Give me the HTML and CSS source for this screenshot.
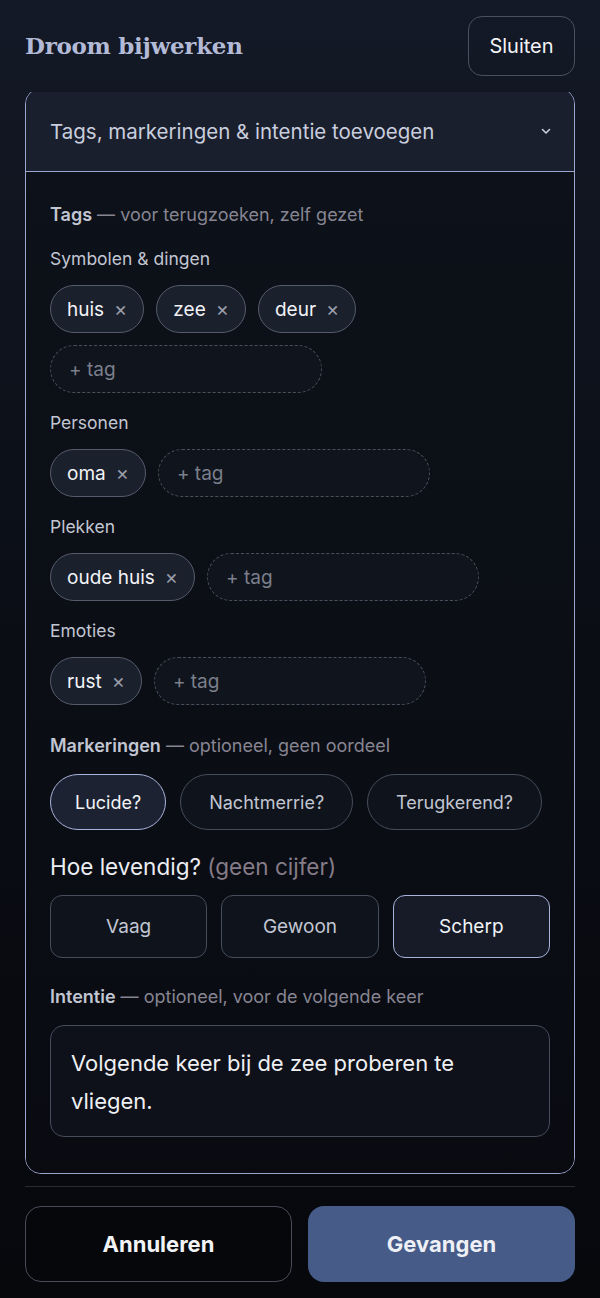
FILE: index.html
```html
<!DOCTYPE html>
<html lang="nl">
<head>
  <meta charset="UTF-8">
  <title>Droom bijwerken</title>
  <link rel="stylesheet" href="styles.css">
</head>
<body>
  <div class="sheet">
    <header class="top">
      <h1 class="title">Droom bijwerken</h1>
      <button class="close-btn">Sluiten</button>
    </header>

    <div class="scroll">
      <section class="extra">
        <div class="extra-head">
          <span>Tags, markeringen &amp; intentie toevoegen</span>
          <svg class="chev" width="12" height="8" viewBox="0 0 12 8"><path d="M2.5 2.5l3.5 3.5 3.5-3.5" fill="none" stroke="#c9cede" stroke-width="1.6" stroke-linecap="round" stroke-linejoin="round"/></svg>
        </div>

        <div class="extra-body">
          <p class="label"><b>Tags</b> — voor terugzoeken, zelf gezet</p>

          <div class="group">
            <p class="sub">Symbolen &amp; dingen</p>
            <div class="chips">
              <span class="chip">huis <i>×</i></span>
              <span class="chip">zee <i>×</i></span>
              <span class="chip">deur <i>×</i></span>
              <span class="add">+ tag</span>
            </div>
          </div>

          <div class="group">
            <p class="sub">Personen</p>
            <div class="chips">
              <span class="chip">oma <i>×</i></span>
              <span class="add">+ tag</span>
            </div>
          </div>

          <div class="group">
            <p class="sub">Plekken</p>
            <div class="chips">
              <span class="chip">oude huis <i>×</i></span>
              <span class="add">+ tag</span>
            </div>
          </div>

          <div class="group">
            <p class="sub">Emoties</p>
            <div class="chips">
              <span class="chip">rust <i>×</i></span>
              <span class="add">+ tag</span>
            </div>
          </div>

          <p class="label marks-label"><b>Markeringen</b> — optioneel, geen oordeel</p>
          <div class="marks">
            <button class="mark on">Lucide?</button>
            <button class="mark">Nachtmerrie?</button>
            <button class="mark">Terugkerend?</button>
          </div>

          <p class="vivid">Hoe levendig? <span>(geen cijfer)</span></p>
          <div class="levels">
            <button class="level">Vaag</button>
            <button class="level">Gewoon</button>
            <button class="level on">Scherp</button>
          </div>

          <p class="label intent-label"><b>Intentie</b> — optioneel, voor de volgende keer</p>
          <div class="intent">Volgende keer bij de zee proberen te vliegen.</div>
        </div>
      </section>
    </div>

    <footer class="actions">
      <button class="btn cancel">Annuleren</button>
      <button class="btn save">Gevangen</button>
    </footer>
  </div>
</body>
</html>
```

FILE: styles.css
```css
* {
  margin: 0;
  padding: 0;
  box-sizing: border-box;
}

body {
  background: linear-gradient(#131926, #0b0e16 45%, #07080c);
  color: #e8eaf0;
  font-family: Inter, "Noto Sans", sans-serif;
  height: 1298px;
  overflow: hidden;
}

.sheet {
  padding: 0 25px;
}

.top {
  display: flex;
  justify-content: space-between;
  align-items: center;
  height: 92px;
}

.title {
  font-family: "DejaVu Serif", serif;
  font-size: 23px;
  font-weight: bold;
  color: #b3bad6;
  letter-spacing: -0.3px;
  margin-top: -2px;
}

.close-btn {
  width: 107px;
  height: 60px;
  border: 1px solid #4b5060;
  border-radius: 14px;
  background: transparent;
  color: #f2f3f7;
  font-family: inherit;
  font-size: 20px;
}

.scroll {
  overflow: hidden;
}

/* card is scrolled a few px under the header */
.extra {
  margin-top: -4px;
  border: 1px solid #9aa6cf;
  border-radius: 16px;
  overflow: hidden;
}

.extra-head {
  display: flex;
  justify-content: space-between;
  align-items: center;
  height: 83px;
  padding: 2px 24px 0 24px;
  background: #1a1f2d;
  border-bottom: 1px solid #9aa6cf;
  color: #c9cede;
  font-size: 20.5px;
}

.chev {
  margin-right: -2px;
}

.extra-body {
  padding: 31px 24px 36px;
  background: linear-gradient(#0d1119, #090b11);
}

.label {
  font-size: 18px;
  line-height: 24px;
  color: #878592;
}

.label b {
  color: #c2c6d2;
  font-weight: 600;
}

.group {
  margin-top: 18px;
}

.label + .group {
  margin-top: 20px;
}

.sub {
  font-size: 17.5px;
  line-height: 24px;
  color: #c2c6d2;
  margin-bottom: 14px;
}

.chips {
  display: flex;
  flex-wrap: wrap;
  gap: 12px;
}

.chip {
  display: inline-flex;
  align-items: center;
  height: 48px;
  padding: 0 16px;
  border: 1px solid #555b6b;
  border-radius: 24px;
  background: #1b202d;
  color: #f2f3f7;
  font-size: 19px;
}

.chip i {
  font-style: normal;
  color: #9a9eaa;
  font-size: 20px;
  margin-left: 10px;
}

.add {
  display: inline-flex;
  align-items: center;
  width: 272px;
  height: 48px;
  padding: 0 18px;
  border: 1px dashed #4a4f5c;
  border-radius: 24px;
  background: #10141d;
  color: #7b7f8b;
  font-size: 19px;
}

.marks-label {
  margin-top: 29px;
}

.marks {
  display: flex;
  gap: 14px;
  margin-top: 16px;
}

.mark {
  height: 56px;
  padding: 0 28px;
  border: 1px solid #474d5c;
  border-radius: 28px;
  background: #0f131b;
  color: #c2c6d2;
  font-family: inherit;
  font-size: 18px;
}

.mark:first-child {
  padding: 0 24px;
}

.mark.on {
  border-color: #a9b4dc;
  background: #1c2232;
  color: #f2f3f7;
}

.vivid {
  margin-top: 22px;
  font-size: 22.5px;
  line-height: 30px;
  color: #eceef3;
}

.vivid span {
  color: #857c88;
}

.levels {
  display: grid;
  grid-template-columns: repeat(3, 1fr);
  gap: 14px;
  margin-top: 13px;
}

.level {
  height: 63px;
  border: 1px solid #474d5c;
  border-radius: 12px;
  background: #0f131b;
  color: #c2c6d2;
  font-family: inherit;
  font-size: 19px;
}

.level.on {
  border-color: #a9b4dc;
  background: #161b27;
  color: #f2f3f7;
}

.intent-label {
  margin-top: 27px;
}

.intent {
  margin-top: 16px;
  height: 112px;
  padding: 18px 20px;
  border: 1px solid #474d5c;
  border-radius: 14px;
  background: #0e1119;
  color: #eef0f4;
  font-size: 22px;
  line-height: 38px;
}

.actions {
  display: grid;
  grid-template-columns: 1fr 1fr;
  gap: 16px;
  margin-top: 12px;
  padding-top: 19px;
  border-top: 1px solid #262a33;
}

.btn {
  height: 76px;
  border-radius: 16px;
  font-family: inherit;
  font-size: 22px;
  font-weight: 700;
}

.cancel {
  border: 1px solid #474c58;
  background: #06070b;
  color: #f2f3f7;
}

.save {
  border: none;
  background: #465b88;
  color: #eef0f6;
}
```
